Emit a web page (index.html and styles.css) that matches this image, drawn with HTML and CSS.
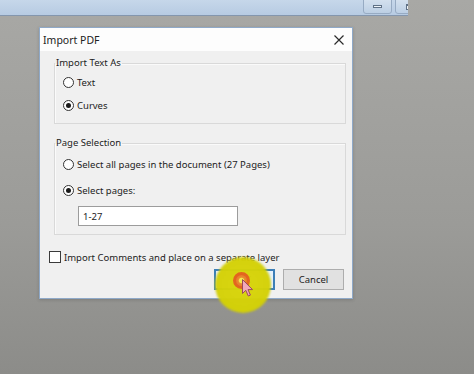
FILE: index.html
```html
<!DOCTYPE html>
<html lang="en">
<head>
    <meta charset="UTF-8">
    <meta name="viewport" content="width=device-width, initial-scale=1.0">
    <title>Import PDF</title>
    <link rel="stylesheet" href="styles.css">
</head>
<body>
    <div class="topbar">
        <div class="win-btns">
            <span class="win-btn win-min"><span class="dash"></span></span>
            <span class="win-btn win-max"><span class="square"></span></span>
        </div>
    </div>

    <div class="dialog">
        <div class="dialog-title">
            <span>Import PDF</span>
            <svg class="close" width="10" height="10" viewBox="0 0 10 10">
                <path d="M0.5 0.5 L9.5 9.5 M9.5 0.5 L0.5 9.5" stroke="#2b2b2b" stroke-width="1.2" fill="none"/>
            </svg>
        </div>
        <div class="dialog-body">
            <fieldset class="group group-text">
                <legend>Import Text As</legend>
                <label class="option"><input type="radio" name="textAs"><span>Text</span></label>
                <label class="option"><input type="radio" name="textAs" checked><span>Curves</span></label>
            </fieldset>

            <fieldset class="group group-pages">
                <legend>Page Selection</legend>
                <label class="option"><input type="radio" name="pages"><span>Select all pages in the document (27 Pages)</span></label>
                <label class="option option-gap"><input type="radio" name="pages" checked><span>Select pages:</span></label>
                <input type="text" class="pages-input" value="1-27">
            </fieldset>

            <label class="check-row"><input type="checkbox"><span>Import Comments and place on a separate layer</span></label>

            <div class="buttons">
                <button class="btn btn-ok">OK
                    <span class="click-glow"></span>
                    <span class="click-ring"></span>
                    <svg class="cursor" width="12" height="19" viewBox="0 0 12 19">
                        <path d="M0.5 0.5 L0.5 14.5 L3.8 11.3 L6.3 17 L8.4 16.1 L6 10.6 L10.5 10.6 Z" fill="#f2a9b8" stroke="#9b4a5c" stroke-width="1"/>
                    </svg>
                </button>
                <button class="btn">Cancel</button>
            </div>
        </div>
    </div>
</body>
</html>
```

FILE: styles.css
```css
* {
    margin: 0;
    padding: 0;
    box-sizing: border-box;
}
body {
    font-family: 'Noto Sans', 'Liberation Sans', sans-serif;
    font-size: 9.5px;
    color: #1c1c1c;
    width: 474px;
    height: 374px;
    overflow: hidden;
    background: linear-gradient(#a8a8a5, #9b9b98 60%, #8c8c89);
}

/* window bar along the top */
.topbar {
    width: 408px;
    height: 16px;
    background: linear-gradient(#c6d7ea, #b7cbe2);
    border-bottom: 1px solid #8496ad;
    display: flex;
    justify-content: flex-end;
    overflow: hidden;
}
.win-btns {
    display: flex;
    gap: 3px;
    margin-right: -16px;
}
.win-btn {
    width: 29px;
    height: 15px;
    margin-top: -1px;
    border: 1px solid #97abc3;
    border-radius: 0 0 3px 3px;
    background: linear-gradient(#d3e0ee, #bccfe4);
    display: flex;
    align-items: center;
    justify-content: center;
}
.dash {
    width: 9px;
    height: 3px;
    background: #eef3f8;
    border: 1px solid #5f7186;
}
.square {
    width: 7px;
    height: 6px;
    border: 1px solid #5f7186;
    border-top-width: 2px;
    background: #eef3f8;
}

/* dialog */
.dialog {
    width: 314px;
    margin: 11px 0 0 39px;
    background: #f0f0f0;
    border: 1px solid #8fa9c8;
    box-shadow: 0 1px 3px rgba(60, 60, 60, 0.25);
}
.dialog-title {
    height: 23px;
    background: #fdfdfd;
    display: flex;
    align-items: center;
    justify-content: space-between;
    padding: 0 8px 0 3px;
    font-size: 10.5px;
    color: #222;
}
.close {
    display: block;
}
.dialog-body {
    padding: 6px 6px 8px 0;
}

.group {
    border: 1px solid #d9d9d9;
    margin-left: 14px;
    min-width: 0;
    box-shadow: inset 1px 1px 0 #fafafa;
}
.group legend {
    padding: 0 1px;
    line-height: 12px;
}
.group-text {
    padding: 2px 0 6px 0;
}
.group-pages {
    margin-top: 13px;
    padding: 4px 0 8px 0;
}

.option {
    height: 23px;
    display: flex;
    align-items: center;
    gap: 3px;
    padding-left: 8px;
}
.option-gap {
    margin-top: 3px;
}
.option input {
    appearance: none;
    width: 11px;
    height: 11px;
    border: 1px solid #333;
    border-radius: 50%;
    background: #fff;
    display: grid;
    place-items: center;
}
.option input:checked::after {
    content: "";
    width: 5px;
    height: 5px;
    border-radius: 50%;
    background: #1a1a1a;
}

.pages-input {
    display: block;
    width: 160px;
    height: 20px;
    margin: 4px 0 0 23px;
    border: 1px solid #9c9c9c;
    background: #fff;
    padding: 0 4px;
    font-family: inherit;
    font-size: 9.5px;
    color: #1c1c1c;
}

.check-row {
    height: 16px;
    margin: 14px 0 0 9px;
    display: flex;
    align-items: center;
    gap: 3px;
}
.check-row input {
    appearance: none;
    width: 12px;
    height: 12px;
    border: 1px solid #3a3a3a;
    background: #fff;
}

.buttons {
    display: flex;
    justify-content: flex-end;
    gap: 8px;
    margin: 4px 2px 0 0;
}
.btn {
    width: 61px;
    height: 21px;
    font-family: inherit;
    font-size: 9.5px;
    color: #1c1c1c;
    background: #e1e1e1;
    border: 1px solid #adadad;
}
.btn-ok {
    position: relative;
    background: #e5f1fb;
    border: 2px solid #3c7fb7;
}

/* click highlight over the OK button */
.click-glow {
    position: absolute;
    left: -1px;
    top: -14px;
    width: 56px;
    height: 56px;
    border-radius: 50%;
    background: radial-gradient(circle, #d9d60a 0%, #d5d206 62%, #c9c504 100%);
    filter: blur(0.8px);
    opacity: 0.97;
}
.click-ring {
    position: absolute;
    left: 17px;
    top: 1px;
    width: 17px;
    height: 17px;
    border-radius: 50%;
    border: 3px solid #e3651f;
    background: radial-gradient(circle, #f0ea50 0%, #f0ea50 28%, #e98a2e 42%, #e7702a 100%);
    filter: blur(0.4px);
}
.cursor {
    position: absolute;
    left: 26px;
    top: 8px;
}
```
